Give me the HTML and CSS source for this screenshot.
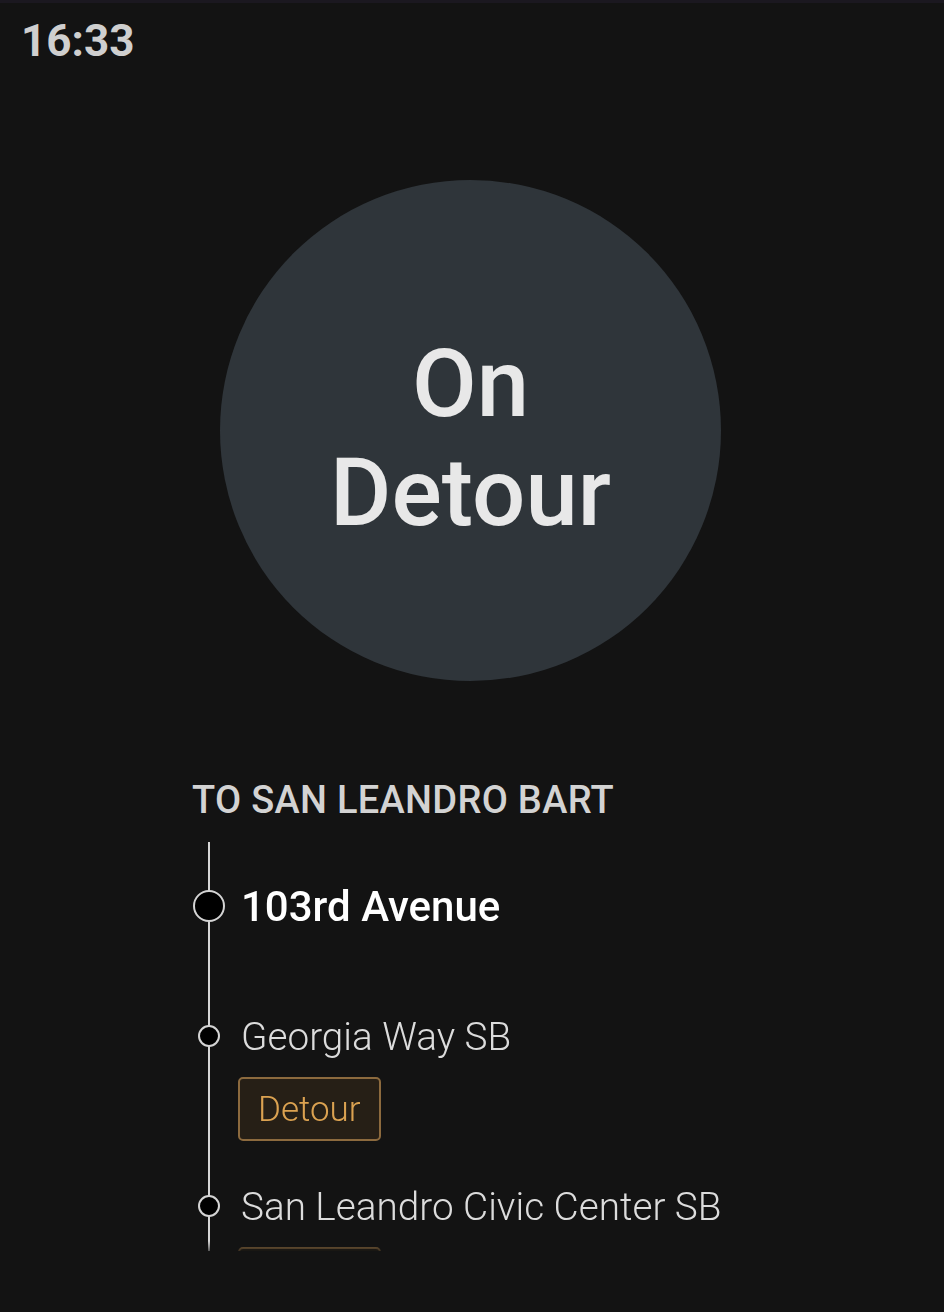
FILE: index.html
```html
<!DOCTYPE html>
<html lang="en">
<head>
<meta charset="utf-8">
<title>On Detour</title>
<link rel="stylesheet" href="styles.css">
</head>
<body>
<div class="screen">
  <header class="status">16:33</header>
  <main class="content">
    <div class="status-circle">
      <span class="status-text">On<br>Detour</span>
    </div>
    <section class="route">
      <h2 class="direction">TO SAN LEANDRO BART</h2>
      <ol class="stops">
        <li class="stop current">
          <div class="stop-row"><span class="node"></span><span class="stop-name">103rd Avenue</span></div>
        </li>
        <li class="stop">
          <div class="stop-row"><span class="node"></span><span class="stop-name">Georgia Way SB</span></div>
          <span class="badge">Detour</span>
        </li>
        <li class="stop">
          <div class="stop-row"><span class="node"></span><span class="stop-name">San Leandro Civic Center SB</span></div>
          <span class="badge">Detour</span>
        </li>
      </ol>
    </section>
  </main>
</div>
</body>
</html>
```
FILE: styles.css
```css
* { box-sizing: border-box; }
html, body {
  margin: 0;
  padding: 0;
  background: #131313;
}
body {
  font-family: Roboto, "Liberation Sans", sans-serif;
  color: #e6e6e6;
}
.screen {
  width: 944px;
  height: 1312px;
  border-top: 3px solid #1b1820;
  overflow: hidden;
}
.status {
  padding: 14px 0 0 21px;
  font-size: 44px;
  font-weight: 700;
  line-height: 48px;
  color: #cfcfcf;
}
.content {
  display: flex;
  flex-direction: column;
  align-items: center;
  padding-top: 115px;
}
.status-circle {
  width: 501px;
  height: 501px;
  border-radius: 50%;
  background: #2f353a;
  display: flex;
  align-items: center;
  justify-content: center;
  margin-left: -3px;
}
.status-text {
  text-align: center;
  font-size: 94px;
  font-weight: 500;
  line-height: 109px;
  color: #e8e8e8;
  margin-top: 16px;
}
.route {
  width: 560px;
  margin-top: 98px;
}
.direction {
  margin: 0;
  font-size: 38px;
  font-weight: 500;
  line-height: 42px;
  color: #d3d3d3;
  letter-spacing: 0.3px;
}
.stops {
  list-style: none;
  margin: 21px 0 0;
  padding: 39px 0 0;
  height: 409px;
  overflow: hidden;
  position: relative;
  -webkit-mask-image: linear-gradient(to bottom, #000 calc(100% - 10px), rgba(0,0,0,0.35));
  mask-image: linear-gradient(to bottom, #000 calc(100% - 10px), rgba(0,0,0,0.35));
}
.stops::before {
  content: "";
  position: absolute;
  left: 16px;
  top: 0;
  bottom: 0;
  width: 1.5px;
  background: #d6d6d6;
}
.stop {
  display: flex;
  flex-direction: column;
  align-items: flex-start;
  padding-bottom: 40px;
}
.stop.current {
  padding-bottom: 80px;
}
.stop-row {
  display: flex;
  align-items: center;
  height: 50px;
}
.node {
  width: 22px;
  height: 22px;
  margin-left: 6px;
  margin-right: 21px;
  border-radius: 50%;
  border: 2px solid #d4d4d4;
  background: #000;
  position: relative;
  z-index: 1;
}
.current .node {
  width: 32px;
  height: 32px;
  margin-left: 1px;
  margin-right: 16px;
}
.stop-name {
  font-size: 38.7px;
  font-weight: 300;
  color: #dcdcdc;
  white-space: nowrap;
}
.current .stop-name {
  font-size: 42px;
  font-weight: 500;
  color: #ffffff;
}
.badge {
  margin: 16px 0 0 46px;
  height: 64px;
  padding: 0 18px;
  display: inline-flex;
  align-items: center;
  border: 2px solid #8c6a3e;
  border-radius: 5px;
  background: #261f16;
  color: #dba251;
  font-size: 35px;
  font-weight: 300;
}
```
